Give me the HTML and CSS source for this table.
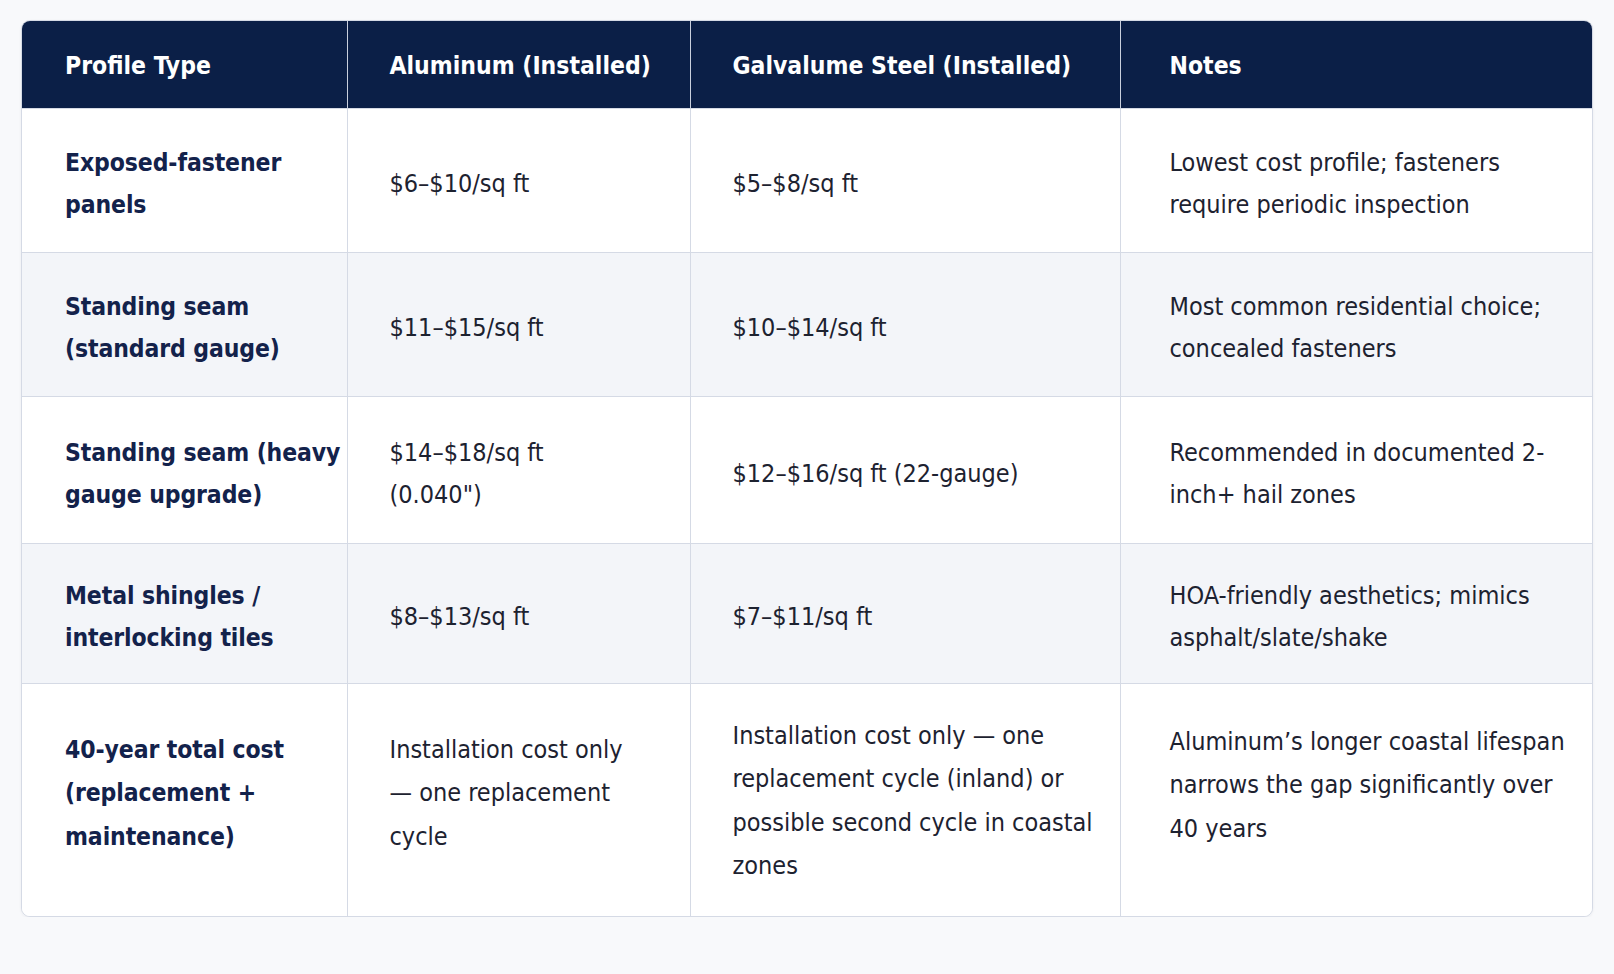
FILE: index.html
```html
<!DOCTYPE html>
<html lang="en">
<head>
<meta charset="utf-8">
<title>Metal Roofing Cost by Profile</title>
<link rel="stylesheet" href="styles.css">
</head>
<body>
<main class="page">
  <div class="card">
    <table class="cost-table">
      <colgroup>
        <col class="c-profile">
        <col class="c-alu">
        <col class="c-steel">
        <col class="c-notes">
      </colgroup>
      <thead>
        <tr class="head-row">
          <th class="cell-profile">Profile Type</th>
          <th class="cell-alu">Aluminum (Installed)</th>
          <th class="cell-steel">Galvalume Steel (Installed)</th>
          <th class="cell-notes">Notes</th>
        </tr>
      </thead>
      <tbody>
        <tr class="row">
          <td class="cell-profile">Exposed-fastener<br>panels</td>
          <td class="cell-alu">$6–$10/sq ft</td>
          <td class="cell-steel">$5–$8/sq ft</td>
          <td class="cell-notes">Lowest cost profile; fasteners<br>require periodic inspection</td>
        </tr>
        <tr class="row row-alt">
          <td class="cell-profile">Standing seam<br>(standard gauge)</td>
          <td class="cell-alu">$11–$15/sq ft</td>
          <td class="cell-steel">$10–$14/sq ft</td>
          <td class="cell-notes">Most common residential choice;<br>concealed fasteners</td>
        </tr>
        <tr class="row row-mid">
          <td class="cell-profile">Standing seam (heavy<br>gauge upgrade)</td>
          <td class="cell-alu">$14–$18/sq ft<br>(0.040")</td>
          <td class="cell-steel">$12–$16/sq ft (22-gauge)</td>
          <td class="cell-notes">Recommended in documented 2-<br>inch+ hail zones</td>
        </tr>
        <tr class="row row-alt row-short">
          <td class="cell-profile">Metal shingles /<br>interlocking tiles</td>
          <td class="cell-alu">$8–$13/sq ft</td>
          <td class="cell-steel">$7–$11/sq ft</td>
          <td class="cell-notes">HOA-friendly aesthetics; mimics<br>asphalt/slate/shake</td>
        </tr>
        <tr class="row row-tall">
          <td class="cell-profile">40-year total cost<br>(replacement +<br>maintenance)</td>
          <td class="cell-alu">Installation cost only<br>— one replacement<br>cycle</td>
          <td class="cell-steel">Installation cost only — one<br>replacement cycle (inland) or<br>possible second cycle in coastal<br>zones</td>
          <td class="cell-notes">Aluminum’s longer coastal lifespan<br>narrows the gap significantly over<br>40 years</td>
        </tr>
      </tbody>
    </table>
  </div>
</main>
</body>
</html>
```

FILE: styles.css
```css
* { box-sizing: border-box; }

html, body {
  margin: 0;
  padding: 0;
  background: #f8f9fb;
}

body {
  font-family: "DejaVu Sans Condensed", "Liberation Sans", sans-serif;
  color: #1d2230;
}

.page {
  padding: 20px 0 0 21px;
}

.card {
  width: 1572px;
  background: #ffffff;
  border: 1px solid #d5dae5;
  border-radius: 9px;
  overflow: hidden;
  box-shadow: 0 1px 3px rgba(20, 30, 60, 0.06);
}

.cost-table {
  width: 100%;
  border-collapse: collapse;
  table-layout: fixed;
}

.c-profile { width: 325px; }
.c-alu { width: 343px; }
.c-steel { width: 430px; }
.c-notes { width: 472px; }

.head-row {
  height: 87px;
  background: #0b1f47;
}

.head-row th {
  color: #ffffff;
  font-weight: 700;
  font-size: 24.5px;
  text-align: left;
  vertical-align: middle;
  border-right: 1px solid #c9d0de;
  padding-top: 4px;
}

.head-row th:last-child { border-right: none; }

.row {
  height: 144px;
  background: #ffffff;
}

.row-alt { background: #f3f5f9; }
.row-mid { height: 147px; }
.row-short { height: 140px; }

.row td {
  font-size: 25px;
  line-height: 42px;
  vertical-align: middle;
  border-top: 1px solid #d5dae5;
  border-right: 1px solid #d5dae5;
  padding-top: 8px;
  padding-bottom: 0;
}

.row td:last-child { border-right: none; }

.row-tall { height: 233px; }

.row-tall td {
  line-height: 43.5px;
  padding-top: 0;
  padding-bottom: 14px;
}

.row-tall td.cell-steel {
  padding-top: 16px;
  padding-bottom: 14px;
}

.row-tall td.cell-notes {
  padding-bottom: 30px;
}

.cell-profile { padding-left: 43px; padding-right: 0; }
.cell-alu { padding-left: 42px; padding-right: 8px; }
.cell-steel { padding-left: 42px; padding-right: 8px; }
.cell-notes { padding-left: 49px; padding-right: 8px; }

.row td.cell-profile {
  font-size: 24.5px;
  letter-spacing: -0.1px;
  font-weight: 700;
  color: #13224b;
}
```
